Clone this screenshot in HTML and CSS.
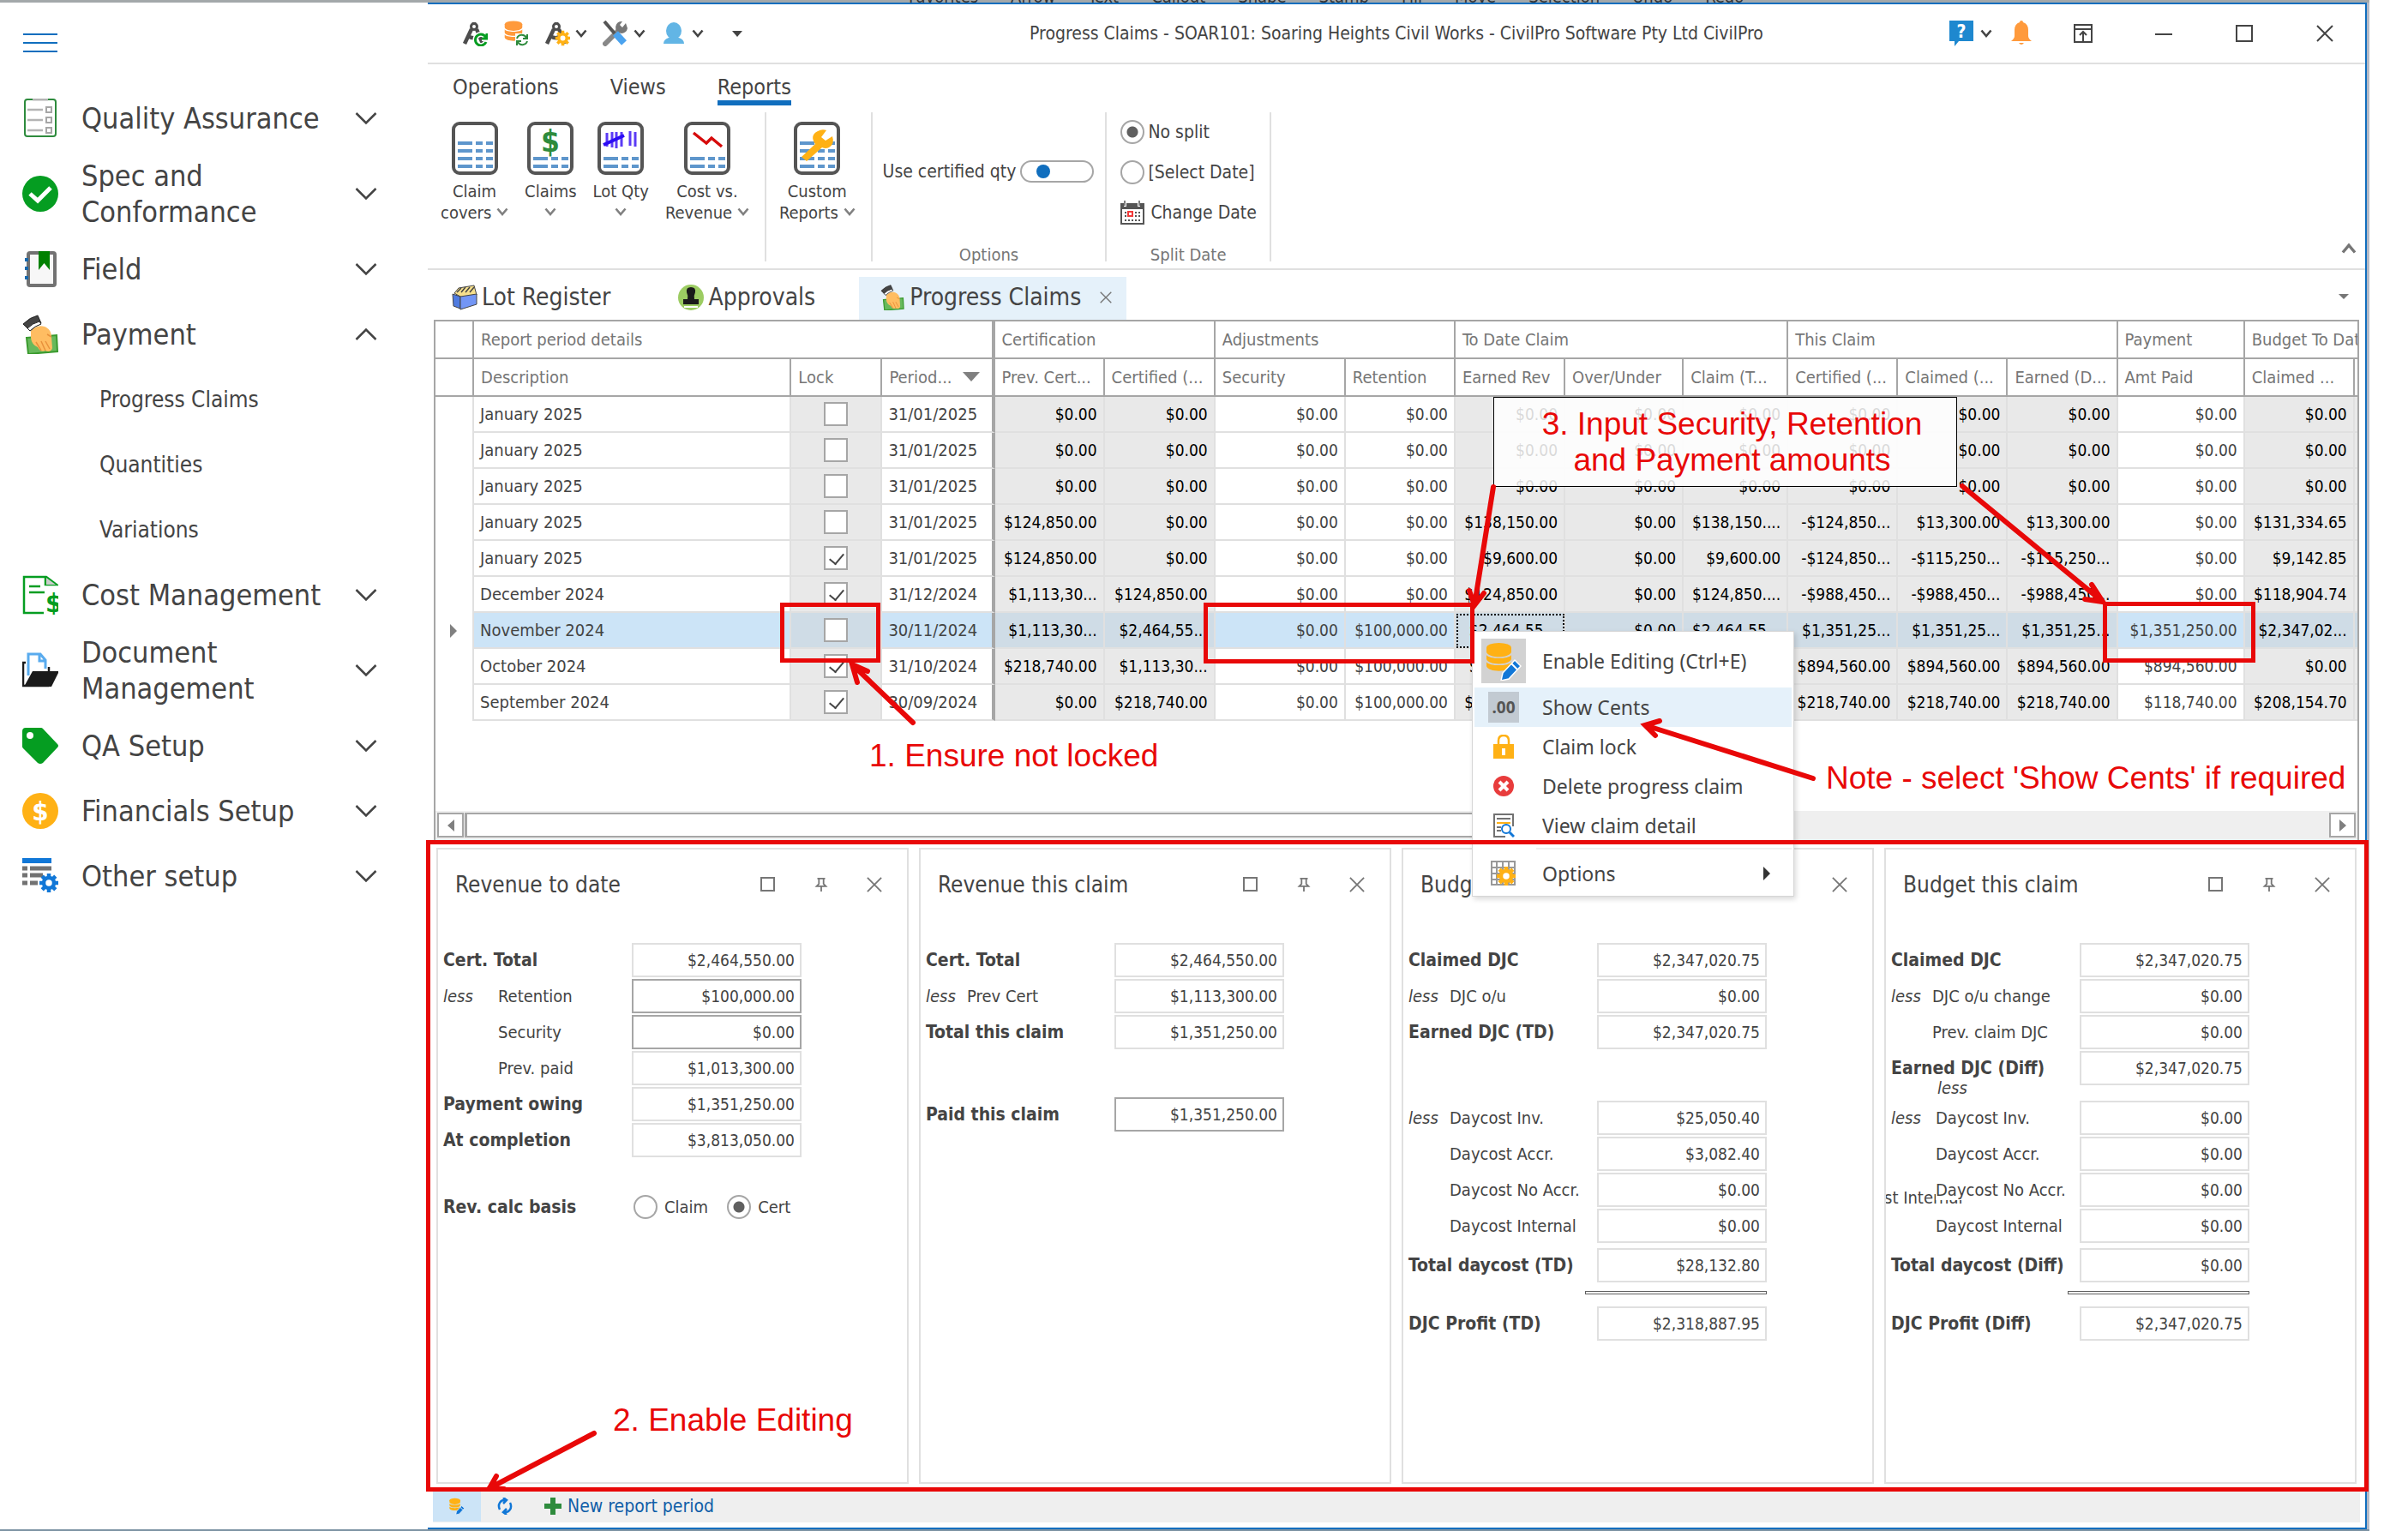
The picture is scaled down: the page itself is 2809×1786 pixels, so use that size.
FILE: index.html
```html
<!DOCTYPE html>
<html lang="en">
<head>
  <meta charset="UTF-8" />
  <meta name="viewport" content="width=device-width, initial-scale=1.0"/>
  <title>Progress Claims - CivilPro</title>
  <link rel="stylesheet" href="styles.css">
</head>
<body>
  <!-- shared icons -->
  <svg class="defs" aria-hidden="true">
    <symbol id="down" viewBox="0 0 26 16"><path d="M1.5 2 13 13.500 24.500 2" fill="none" stroke="currentColor" stroke-width="2.500"/></symbol>
    <symbol id="small-down" viewBox="0 0 14 10"><path d="M1.500 1.500 7 8 12.500 1.500" fill="none" stroke="currentColor" stroke-width="2.600"/></symbol>
    <symbol id="cross" viewBox="0 0 20 20"><path d="M1 1 19 19M19 1 1 19" fill="none" stroke="currentColor" stroke-width="2"/></symbol>
    <symbol id="box" viewBox="0 0 18 18"><rect x="1" y="1" width="15" height="15" fill="none" stroke="currentColor" stroke-width="2"/></symbol>
    <symbol id="pin" viewBox="0 0 16 20"><path d="M3 2h10M5 2v7L2 12h12l-3-3V2M8 12v7" fill="none" stroke="currentColor" stroke-width="2"/></symbol>
    <symbol id="hand" viewBox="0 0 42 46">
      <path d="M5 27 40 24 41 43 7 46Z" fill="#67b95c" stroke="#3a9a2e" stroke-width="2"/>
      <path d="M10 19C14 14 20 12 26 14 31 16 34 20 34 26L35 39C34 43 30 44 27 42 23 44 20 42 18 38 13 36 10 31 10 26Z" fill="#ffbd62"/>
      <path d="M16 32 22 42M22 31 27 42M27 31 32 40M29 23 34 26" stroke="#e8913c" stroke-width="1.500" fill="none"/>
      <path d="M1 11Q9 3 18 1L22 10Q15 13 9 19Z" fill="#444" stroke="#222"/>
      <path d="M6 16Q12 10 20 8L22 11Q15 13 9 19Z" fill="#fff" stroke="#222"/>
    </symbol>
    <symbol id="compass" viewBox="0 0 30 30">
      <path d="M14 2v5M11 10 3 27M17 10l7 17M7 18q7 5 14-1" fill="none" stroke="#4d4d4d" stroke-width="4.500"/>
      <circle cx="14" cy="7" r="3.500" fill="#fff" stroke="#4d4d4d" stroke-width="3"/>
    </symbol>
    <symbol id="gear" viewBox="0 0 24 24">
      <path d="M12 1v22M1 12h22M4.200 4.200l15.600 15.600M19.800 4.200 4.200 19.800" stroke="currentColor" stroke-width="4.500"/>
      <circle cx="12" cy="12" r="6" fill="#fff" stroke="currentColor" stroke-width="4.500"/>
    </symbol>
    <symbol id="db" viewBox="0 0 30 34">
      <ellipse cx="15" cy="6" rx="14" ry="5.500"/>
      <path d="M1 6v5c2 7 26 7 28 0V6ZM1 14v5c2 7 26 7 28 0v-5c-3 5-25 5-28 0ZM1 22v5c2 7 26 7 28 0v-5c-3 5-25 5-28 0Z"/>
    </symbol>
    <symbol id="db-edit" viewBox="0 0 42 46">
      <use href="#db" x="0" y="0" width="31" height="38" fill="#ffb115"/>
      <path d="M18 46 20 37 34 22 41 29 27 44Z" fill="#1177d7" stroke="#fff" stroke-width="1.500"/>
      <path d="M30 26 37 33" stroke="#fff" stroke-width="2"/>
    </symbol>
    <symbol id="page" viewBox="0 0 54 62">
      <rect x="2" y="2" width="50" height="58" rx="7" fill="#fff" stroke="#555" stroke-width="4"/>
      <path d="M7 43h17m4 0h8m4 0h8M7 52h17m4 0h8m4 0h8" stroke="#5e96cc" stroke-width="4"/>
    </symbol>
    <symbol id="page-lines" viewBox="0 0 54 62">
      <use href="#page"/>
      <path d="M7 25h17m4 0h8m4 0h8M7 34h17m4 0h8m4 0h8" stroke="#5e96cc" stroke-width="4"/>
    </symbol>
  </svg>

  <div class="behind-top" aria-hidden="true"><span>Favorites</span><span>Arrow</span><span>Text</span><span>Callout</span><span>Shape</span><span>Stamp</span><span>Fill</span><span>Move</span><span>Selection</span><span>Undo</span><span>Redo</span></div>

  <div class="app">
    <nav class="sidebar">
      <button class="menu-toggle" aria-label="Toggle menu"><svg viewBox="0 0 40 22"><path d="M0 1h40M0 11h40M0 21h40" stroke="#106ebe" stroke-width="2"/></svg></button>

      <button class="nav-item">
        <svg class="nav-icon" viewBox="0 0 42 46"><rect x="3" y="1" width="36" height="43" rx="3" fill="#fff" stroke="#2e8b3d" stroke-width="2"/><path d="M12 1h18" stroke="#b4b4b4" stroke-width="3"/><path d="M6 13h18M6 25h18M6 37h18" stroke="#b4b4b4" stroke-width="2.500"/><path d="M28 10h6v6h-6ZM28 22h6v6h-6ZM28 34h6v6h-6Z" fill="none" stroke="#a6a6a6" stroke-width="2"/></svg>
        <span>Quality Assurance</span><svg class="chev"><use href="#down"/></svg>
      </button>
      <button class="nav-item double">
        <svg class="nav-icon" viewBox="0 0 42 46"><circle cx="21" cy="23" r="21" fill="#059d21"/><path d="m9 23 9 8 15-15" fill="none" stroke="#fff" stroke-width="5"/></svg>
        <span>Spec and Conformance</span><svg class="chev"><use href="#down"/></svg>
      </button>
      <button class="nav-item">
        <svg class="nav-icon" viewBox="0 0 42 46"><rect x="7" y="4" width="31" height="38" rx="2" fill="#f7f7f7" stroke="#727272" stroke-width="4"/><path d="M3 12h4M3 22h4M3 33h4" stroke="#1768ac" stroke-width="4"/><path d="M19 2h13v22l-6.500-8L19 24Z" fill="#008000"/></svg>
        <span>Field</span><svg class="chev"><use href="#down"/></svg>
      </button>
      <button class="nav-item">
        <svg class="nav-icon"><use href="#hand"/></svg>
        <span>Payment</span><svg class="chev up"><use href="#down"/></svg>
      </button>
      <a class="nav-sub" href="#">Progress Claims</a>
      <a class="nav-sub" href="#">Quantities</a>
      <a class="nav-sub" href="#">Variations</a>
      <button class="nav-item">
        <svg class="nav-icon" viewBox="0 0 42 46"><path d="M25 44H2V2h26l12 9H27V2M8 13h13M8 20h18" fill="none" stroke="#059d21" stroke-width="2.500"/><path d="M28 3v8h11Z" fill="#ccc"/><text x="27" y="43" font-size="31" font-weight="bold" fill="#059d21">$</text></svg>
        <span>Cost Management</span><svg class="chev"><use href="#down"/></svg>
      </button>
      <button class="nav-item double">
        <svg class="nav-icon" viewBox="0 0 42 46"><path d="M4 14H1v27h30M31 19v5" fill="none" stroke="#1a1a1a" stroke-width="2.500"/><path d="M7 29V4h14l6 7v10M20 4v8h7" fill="none" stroke="#59abee" stroke-width="3"/><path d="M12 24h31l-9 18H2Z" fill="#1a1a1a"/></svg>
        <span>Document Management</span><svg class="chev"><use href="#down"/></svg>
      </button>
      <button class="nav-item">
        <svg class="nav-icon" viewBox="0 0 42 46"><path d="M4 2h18q1 0 2 1l17 18q2 2 0 4L24 43q-3 2-6 0L1 26q-1-1-1-2V6q0-4 4-4Z" fill="#059d21"/><circle cx="9" cy="11" r="4" fill="#fff"/></svg>
        <span>QA Setup</span><svg class="chev"><use href="#down"/></svg>
      </button>
      <button class="nav-item">
        <svg class="nav-icon" viewBox="0 0 42 46"><circle cx="21" cy="23" r="21" fill="#ffb115"/><text x="21" y="34" font-size="31" font-weight="bold" text-anchor="middle" fill="#fff">$</text></svg>
        <span>Financials Setup</span><svg class="chev"><use href="#down"/></svg>
      </button>
      <button class="nav-item">
        <svg class="nav-icon" viewBox="0 0 42 46"><path d="M0 5h34" stroke="#1177d7" stroke-width="6"/><path d="M0 14h6m3 0h25M0 22h6m3 0h15M0 31h6m3 0h9" stroke="#727272" stroke-width="5"/><svg x="19" y="19" width="24" height="24" color="#1177d7"><use href="#gear"/></svg></svg>
        <span>Other setup</span><svg class="chev"><use href="#down"/></svg>
      </button>
    </nav>

    <main class="window">
      <header class="titlebar">
        <div class="quick">
          <button aria-label="Refresh project"><svg class="i30" viewBox="0 0 30 30"><use href="#compass"/><path d="M28 20a6.500 6.500 0 1 0 0 5M29 15v6h-6" fill="none" stroke="#fff" stroke-width="6"/><path d="M28 20a6.500 6.500 0 1 0 0 5M29 15v6h-6" fill="none" stroke="#059d21" stroke-width="3"/></svg></button>
          <button aria-label="Refresh data"><svg class="i30" viewBox="0 0 30 30"><use href="#db" x="1" y="0" width="22" height="25" fill="#ff9a3c"/><rect x="14" y="15" width="16" height="15" fill="#fff"/><path d="M16 21a6 6 0 0 1 11-1M28 16v5h-5M28 24a6 6 0 0 1-11 1M16 29v-5h5" fill="none" stroke="#2e8b3d" stroke-width="2"/></svg></button>
          <button aria-label="Project setup"><svg class="i30" viewBox="0 0 30 30"><use href="#compass"/><svg x="12" y="11" width="19" height="19" color="#ffb115"><use href="#gear"/></svg></svg><svg class="i12"><use href="#small-down"/></svg></button>
          <button aria-label="Tools"><svg class="i30" viewBox="0 0 30 30"><path d="M3 27 19 11" stroke="#888" stroke-width="6" stroke-linecap="round"/><path d="M27 3l-4 5-3-3 3-4a7 7 0 1 0 6 8Z" fill="#777"/><path d="M2 1 14 15" stroke="#555" stroke-width="4"/><path d="M15 15 25 26" stroke="#4ba3ef" stroke-width="8"/></svg><svg class="i12"><use href="#small-down"/></svg></button>
          <button aria-label="User"><svg class="i30" viewBox="0 0 30 30"><ellipse cx="15" cy="12" rx="9" ry="10" fill="#62b5e5"/><path d="M3 27q0-5 6-7h12q6 2 6 7Z" fill="#62b5e5"/></svg><svg class="i12"><use href="#small-down"/></svg></button>
          <button class="more" aria-label="Customise"><svg class="i12" viewBox="0 0 12 12"><path d="M0 3h12L6 10Z" fill="#444"/></svg></button>
        </div>
        <h1>Progress Claims - SOAR101: Soaring Heights Civil Works - CivilPro Software Pty Ltd CivilPro</h1>
        <div class="controls">
          <button class="help" aria-label="Help"><svg class="i30" viewBox="0 0 30 30"><path d="M1 0h28v24H12l-5 6v-6H1Z" fill="#1e88cf"/><text x="15" y="20" font-size="21" font-weight="bold" text-anchor="middle" fill="#fff">?</text></svg><svg class="i12"><use href="#small-down"/></svg></button>
          <button class="bell" aria-label="Notifications"><svg class="i30" viewBox="0 0 30 30"><path d="M15 0q2 0 2 2 6 2 6 9v7q0 3 4 6H3q4-3 4-6v-7q0-7 6-9 0-2 2-2ZM12 26h6q-3 4-6 0Z" fill="#ff9a3c"/></svg></button>
          <button aria-label="Ribbon options"><svg class="i22" viewBox="0 0 22 22"><path d="M1 1h20v20H1ZM1 6h20M11 20V9M7 13l4-4 4 4" fill="none" stroke="#444" stroke-width="2"/></svg></button>
          <button aria-label="Minimise"><svg class="i20" viewBox="0 0 20 20"><path d="M0 11h20" stroke="#444" stroke-width="2"/></svg></button>
          <button aria-label="Maximise"><svg class="i20" viewBox="0 0 20 20"><path d="M1 1h18v18H1Z" fill="none" stroke="#444" stroke-width="2"/></svg></button>
          <button aria-label="Close"><svg class="i20"><use href="#cross"/></svg></button>
        </div>
      </header>

      <nav class="ribbon-tabs">
        <a href="#">Operations</a>
        <a href="#">Views</a>
        <a href="#" class="active">Reports</a>
      </nav>

      <section class="ribbon">
        <div class="group">
          <div class="group-body reports">
            <button class="big"><svg><use href="#page-lines"/></svg><span>Claim<br>covers <svg class="i10"><use href="#small-down"/></svg></span></button>
            <button class="big"><svg viewBox="0 0 54 62"><use href="#page"/><text x="27" y="35" font-size="35" font-weight="bold" text-anchor="middle" fill="#2e8b3d">$</text></svg><span>Claims<br><svg class="i10"><use href="#small-down"/></svg></span></button>
            <button class="big"><svg viewBox="0 0 54 62"><use href="#page"/><path d="M11 13v16M17 12v18M22 12v19M28 12v17M38 11v17M44 12v17" stroke="#5b3bf5" stroke-width="3"/><path d="M7 27 31 16" stroke="#2b0bf5" stroke-width="4"/></svg><span>Lot Qty<br><svg class="i10"><use href="#small-down"/></svg></span></button>
            <button class="big"><svg viewBox="0 0 54 62"><use href="#page"/><path d="m11 13 15 12 6-6 12 10" fill="none" stroke="#d60b0b" stroke-width="3.500"/></svg><span>Cost vs.<br>Revenue <svg class="i10"><use href="#small-down"/></svg></span></button>
          </div>
          <div class="group-label"></div>
        </div>
        <div class="group">
          <div class="group-body custom">
            <button class="big"><svg viewBox="0 0 54 62"><use href="#page-lines"/><path d="m9 41 16-15q-7-10 3-15 5-3 10-1l-6 8 5 4 8-5q3 9-4 13-4 2-8 0L15 46Z" fill="#ffb115"/></svg><span>Custom<br>Reports <svg class="i10"><use href="#small-down"/></svg></span></button>
          </div>
          <div class="group-label"></div>
        </div>
        <div class="group">
          <label class="group-body options">Use certified qty <input type="checkbox" role="switch" class="switch"></label>
          <div class="group-label">Options</div>
        </div>
        <div class="group">
          <div class="group-body split">
            <label><input type="radio" name="split" checked>No split</label>
            <label><input type="radio" name="split">[Select Date]</label>
            <button><svg viewBox="0 0 28 28"><path d="M1 9h26v18H1Z" fill="#fff" stroke="#555" stroke-width="2"/><path d="M0 3h4v4h3V3h13v4h3V3h5v7H0Z" fill="#555"/><path d="M5 0v6M22 0v6" stroke="#555" stroke-width="1.500"/><path d="M5 14h20M5 18h20M5 23h20" stroke="#555" stroke-width="2" stroke-dasharray="2 2"/><rect x="9" y="13" width="5" height="5" fill="#fff" stroke="#f03a3a" stroke-width="2"/></svg>Change Date</button>
          </div>
          <div class="group-label">Split Date</div>
        </div>
        <button class="collapse" aria-label="Collapse ribbon"><svg class="i18 up"><use href="#small-down"/></svg></button>
      </section>

      <nav class="doc-tabs">
        <a href="#"><svg class="i30" viewBox="0 0 30 30"><path d="m3 10 5-6 18-3 3 11-12 6Z" fill="#f7e08c" stroke="#444"/><path d="m6 9 5-5m0 5 5-6m0 6 5-6m0 6 5-6" stroke="#444" stroke-width="1.500"/><path d="m1 11 9 3v14l-8-3Z" fill="#4f7be0" stroke="#444"/><path d="m10 14 19-3v12l-19 6Z" fill="#7396f5" stroke="#444"/></svg>Lot Register</a>
        <a href="#"><svg class="i30" viewBox="0 0 30 30"><circle cx="15" cy="15" r="15" fill="#9ccc62"/><path d="M15 3q6 0 5 6-2 4-1 8h5v6H6v-6h5q1-4-1-8-1-6 5-6Z" fill="#1a1a1a"/><path d="M7 26h16" stroke="#fff" stroke-width="2"/></svg>Approvals</a>
        <a href="#" class="active"><svg class="i30"><use href="#hand"/></svg>Progress Claims<svg class="i16 close"><use href="#cross"/></svg></a>
        <button aria-label="Open tabs"><svg class="i12" viewBox="0 0 12 12"><path d="M0 3h12L6 9Z" fill="#767676"/></svg></button>
      </nav>

      <section class="grid">
        <table>
          <colgroup>
            <col class="w45"><col class="w370"><col class="w106"><col class="w131"><col class="w128"><col class="w129"><col class="w152"><col class="w128"><col class="w128"><col class="w138"><col class="w122"><col class="w128"><col class="w128"><col class="w128"><col class="w148"><col class="w128"><col class="w128">
          </colgroup>
          <thead>
            <tr><th></th><th colspan="3" class="fixed">Report period details</th><th colspan="2">Certification</th><th colspan="2">Adjustments</th><th colspan="3">To Date Claim</th><th colspan="3">This Claim</th><th>Payment</th><th colspan="2">Budget To Date</th></tr>
            <tr><th></th><th>Description</th><th>Lock</th><th class="fixed"><span class="sorted">Period... <svg viewBox="0 0 20 12"><path d="M0 0h20L10 11Z" fill="#808080"/></svg></span></th><th>Prev. Cert...</th><th>Certified (...</th><th>Security</th><th>Retention</th><th>Earned Rev</th><th>Over/Under</th><th>Claim (T...</th><th>Certified (...</th><th>Claimed (...</th><th>Earned (D...</th><th>Amt Paid</th><th>Claimed ...</th><th></th></tr>
          </thead>
          <tbody>
            <tr><td></td><td>January 2025</td><td><input type="checkbox" aria-label="Lock"></td><td>31/01/2025</td><td>$0.00</td><td>$0.00</td><td>$0.00</td><td>$0.00</td><td>$0.00</td><td>$0.00</td><td>$0.00</td><td>$0.00</td><td>$0.00</td><td>$0.00</td><td>$0.00</td><td>$0.00</td><td></td></tr>
            <tr><td></td><td>January 2025</td><td><input type="checkbox" aria-label="Lock"></td><td>31/01/2025</td><td>$0.00</td><td>$0.00</td><td>$0.00</td><td>$0.00</td><td>$0.00</td><td>$0.00</td><td>$0.00</td><td>$0.00</td><td>$0.00</td><td>$0.00</td><td>$0.00</td><td>$0.00</td><td></td></tr>
            <tr><td></td><td>January 2025</td><td><input type="checkbox" aria-label="Lock"></td><td>31/01/2025</td><td>$0.00</td><td>$0.00</td><td>$0.00</td><td>$0.00</td><td>$0.00</td><td>$0.00</td><td>$0.00</td><td>$0.00</td><td>$0.00</td><td>$0.00</td><td>$0.00</td><td>$0.00</td><td></td></tr>
            <tr><td></td><td>January 2025</td><td><input type="checkbox" aria-label="Lock"></td><td>31/01/2025</td><td>$124,850.00</td><td>$0.00</td><td>$0.00</td><td>$0.00</td><td>$138,150.00</td><td>$0.00</td><td>$138,150....</td><td>-$124,850...</td><td>$13,300.00</td><td>$13,300.00</td><td>$0.00</td><td>$131,334.65</td><td></td></tr>
            <tr><td></td><td>January 2025</td><td><input type="checkbox" aria-label="Lock" checked></td><td>31/01/2025</td><td>$124,850.00</td><td>$0.00</td><td>$0.00</td><td>$0.00</td><td>$9,600.00</td><td>$0.00</td><td>$9,600.00</td><td>-$124,850...</td><td>-$115,250...</td><td>-$115,250...</td><td>$0.00</td><td>$9,142.85</td><td></td></tr>
            <tr><td></td><td>December 2024</td><td><input type="checkbox" aria-label="Lock" checked></td><td>31/12/2024</td><td>$1,113,30...</td><td>$124,850.00</td><td>$0.00</td><td>$0.00</td><td>$124,850.00</td><td>$0.00</td><td>$124,850....</td><td>-$988,450...</td><td>-$988,450...</td><td>-$988,450...</td><td>$0.00</td><td>$118,904.74</td><td></td></tr>
            <tr class="selected"><td><svg viewBox="0 0 8 16"><path d="M0 0 8 8 0 16Z" fill="#808080"/></svg></td><td>November 2024</td><td><input type="checkbox" aria-label="Lock"></td><td>30/11/2024</td><td>$1,113,30...</td><td>$2,464,55...</td><td>$0.00</td><td>$100,000.00</td><td class="focused">$2,464,55...</td><td>$0.00</td><td>$2,464,55...</td><td>$1,351,25...</td><td>$1,351,25...</td><td>$1,351,25...</td><td>$1,351,250.00</td><td>$2,347,02...</td><td></td></tr>
            <tr><td></td><td>October 2024</td><td><input type="checkbox" aria-label="Lock" checked></td><td>31/10/2024</td><td>$218,740.00</td><td>$1,113,30...</td><td>$0.00</td><td>$100,000.00</td><td>$1,113,30...</td><td>$0.00</td><td>$1,113,30...</td><td>$894,560.00</td><td>$894,560.00</td><td>$894,560.00</td><td>$894,560.00</td><td>$0.00</td><td></td></tr>
            <tr><td></td><td>September 2024</td><td><input type="checkbox" aria-label="Lock" checked></td><td>30/09/2024</td><td>$0.00</td><td>$218,740.00</td><td>$0.00</td><td>$100,000.00</td><td>$218,740.00</td><td>$0.00</td><td>$218,740....</td><td>$218,740.00</td><td>$218,740.00</td><td>$218,740.00</td><td>$118,740.00</td><td>$208,154.70</td><td></td></tr>
          </tbody>
        </table>
        <div class="scrollbar">
          <button aria-label="Scroll left"><svg viewBox="0 0 8 14"><path d="M8 0 0 7 8 14Z" fill="#808080"/></svg></button>
          <div class="thumb"></div>
          <button aria-label="Scroll right"><svg viewBox="0 0 8 14"><path d="M0 0 8 7 0 14Z" fill="#808080"/></svg></button>
        </div>
      </section>

      <section class="panels">
        <article class="panel wide-indent">
          <header><h2>Revenue to date</h2><button aria-label="Maximise"><svg><use href="#box"/></svg></button><button aria-label="Pin"><svg><use href="#pin"/></svg></button><button aria-label="Close"><svg><use href="#cross"/></svg></button></header>
          <div class="fields">
            <label class="row"><b>Cert. Total</b><input value="$2,464,550.00" readonly></label>
            <label class="row"><span><i>less</i>Retention</span><input value="$100,000.00"></label>
            <label class="row"><span class="in">Security</span><input value="$0.00"></label>
            <label class="row"><span class="in">Prev. paid</span><input value="$1,013,300.00" readonly></label>
            <label class="row"><b>Payment owing</b><input value="$1,351,250.00" readonly></label>
            <label class="row"><b>At completion</b><input value="$3,813,050.00" readonly></label>
            <div class="row basis"><b>Rev. calc basis</b><label><input type="radio" name="basis">Claim</label><label><input type="radio" name="basis" checked>Cert</label></div>
          </div>
        </article>
        <article class="panel">
          <header><h2>Revenue this claim</h2><button aria-label="Maximise"><svg><use href="#box"/></svg></button><button aria-label="Pin"><svg><use href="#pin"/></svg></button><button aria-label="Close"><svg><use href="#cross"/></svg></button></header>
          <div class="fields">
            <label class="row"><b>Cert. Total</b><input value="$2,464,550.00" readonly></label>
            <label class="row"><span><i>less</i>Prev Cert</span><input value="$1,113,300.00" readonly></label>
            <label class="row"><b>Total this claim</b><input value="$1,351,250.00" readonly></label>
            <label class="row paid"><b>Paid this claim</b><input value="$1,351,250.00"></label>
          </div>
        </article>
        <article class="panel">
          <header><h2>Budget to date</h2><button aria-label="Maximise"><svg><use href="#box"/></svg></button><button aria-label="Pin"><svg><use href="#pin"/></svg></button><button aria-label="Close"><svg><use href="#cross"/></svg></button></header>
          <div class="fields">
            <label class="row"><b>Claimed DJC</b><input value="$2,347,020.75" readonly></label>
            <label class="row"><span><i>less</i>DJC o/u</span><input value="$0.00" readonly></label>
            <label class="row"><b>Earned DJC (TD)</b><input value="$2,347,020.75" readonly></label>
            <div class="row"></div>
            <div class="daycosts">
              <label class="row"><span><i>less</i>Daycost Inv.</span><input value="$25,050.40" readonly></label>
              <label class="row"><span class="in">Daycost Accr.</span><input value="$3,082.40" readonly></label>
              <label class="row"><span class="in">Daycost No Accr.</span><input value="$0.00" readonly></label>
              <label class="row"><span class="in">Daycost Internal</span><input value="$0.00" readonly></label>
            </div>
            <label class="row"><b>Total daycost (TD)</b><input value="$28,132.80" readonly></label>
            <div class="rule"></div>
            <label class="row"><b>DJC Profit (TD)</b><input value="$2,318,887.95" readonly></label>
          </div>
        </article>
        <article class="panel">
          <header><h2>Budget this claim</h2><button aria-label="Maximise"><svg><use href="#box"/></svg></button><button aria-label="Pin"><svg><use href="#pin"/></svg></button><button aria-label="Close"><svg><use href="#cross"/></svg></button></header>
          <div class="fields">
            <label class="row"><b>Claimed DJC</b><input value="$2,347,020.75" readonly></label>
            <label class="row"><span><i>less</i>DJC o/u change</span><input value="$0.00" readonly></label>
            <label class="row"><span class="in">Prev. claim DJC</span><input value="$0.00" readonly></label>
            <label class="row"><b>Earned DJC (Diff)</b><input value="$2,347,020.75" readonly></label>
            <div class="daycosts diff">
              <i class="stray-less">less</i>
              <span class="stray-internal">st Internal</span>
              <label class="row"><span><i>less</i>Daycost Inv.</span><input value="$0.00" readonly></label>
              <label class="row"><span class="in">Daycost Accr.</span><input value="$0.00" readonly></label>
              <label class="row"><span class="in"><span class="cover">Daycost No Accr.</span></span><input value="$0.00" readonly></label>
              <label class="row"><span class="in">Daycost Internal</span><input value="$0.00" readonly></label>
            </div>
            <label class="row"><b>Total daycost (Diff)</b><input value="$0.00" readonly></label>
            <div class="rule"></div>
            <label class="row"><b>DJC Profit (Diff)</b><input value="$2,347,020.75" readonly></label>
          </div>
        </article>
      </section>

      <footer class="statusbar">
        <button class="edit" aria-label="Enable editing"><svg><use href="#db-edit"/></svg></button>
        <button class="sync" aria-label="Refresh"><svg viewBox="0 0 20 20"><path d="M11 3C5 2 1 8 4 14M9 17c6 1 10-5 7-11M8 0l4 3-4 4M12 13l-4 4 4 3" fill="none" stroke="#1177d7" stroke-width="2.500"/></svg></button>
        <button class="new"><svg viewBox="0 0 20 20"><path d="M10 0v20M0 10h20" stroke="#2e8b3d" stroke-width="6"/></svg>New report period</button>
      </footer>
    </main>
  </div>
  <div class="behind-bottom"></div>

  <menu class="context">
    <li class="tall"><button><span class="pic on-big"><svg class="i42"><use href="#db-edit"/></svg></span>Enable Editing (Ctrl+E)</button></li>
    <li class="hover"><button><span class="pic"><b class="cents">.00</b></span>Show Cents</button></li>
    <li><button><span class="pic"><svg class="i26" viewBox="0 0 26 28"><path d="M1 11h24v17H1Z" fill="#ffb115"/><path d="M7 12V7q0-6 6-6t6 6v5" fill="none" stroke="#ffb115" stroke-width="2.500"/><path d="M13 16v8" stroke="#fff" stroke-width="4"/></svg></span>Claim lock</button></li>
    <li><button><span class="pic"><svg class="i26" viewBox="0 0 26 26"><circle cx="13" cy="13" r="12" fill="#e83c3c"/><path d="m8 8 10 10M18 8 8 18" stroke="#fff" stroke-width="4"/></svg></span>Delete progress claim</button></li>
    <li><button><span class="pic"><svg class="i26" viewBox="0 0 26 28"><path d="M24 15V1H2v26h13" fill="none" stroke="#727272" stroke-width="2"/><path d="M5 6h16M5 16h5M5 20h5" stroke="#727272" stroke-width="2"/><path d="M5 11h16" stroke="#ffb115" stroke-width="2"/><circle cx="16" cy="18" r="5" fill="#fff" stroke="#1177d7" stroke-width="2"/><path d="m20 22 5 5" stroke="#1177d7" stroke-width="3"/></svg></span>View claim detail</button></li>
    <li class="separator"></li>
    <li><button><span class="pic"><svg class="i30" viewBox="0 0 30 30"><path d="M1 1h27v27H1ZM7 1v27M14 1v27M21 1v27M1 8h27M1 15h27M1 22h27" fill="none" stroke="#999" stroke-width="2"/><svg x="6" y="6" width="24" height="24" color="#ffb115"><use href="#gear"/></svg></svg></span>Options<svg class="sub" viewBox="0 0 8 16"><path d="M0 0 8 8 0 16Z" fill="#333"/></svg></button></li>
  </menu>

  <!-- step notes over the window -->
  <div class="notes">
    <div class="mark lock-cell"></div>
    <div class="mark adjustment-cells"></div>
    <div class="mark paid-cell"></div>
    <div class="mark panel-area"></div>
    <p class="callout">3. Input Security, Retention<br>and Payment amounts</p>
    <p class="note one">1. Ensure not locked</p>
    <p class="note two">2. Enable Editing</p>
    <p class="note cents-note">Note - select 'Show Cents' if required</p>
    <svg class="arrows" width="2809" height="1786">
      <path d="M1065 843 994 775M1000 796 994 775 1012 783"/>
      <path d="M1742 568 1720 706M1714 689 1720 706 1731 692"/>
      <path d="M2289 567 2453 702M2440 682 2453 702 2432 699"/>
      <path d="M2115 908 1919 846M1936 841 1919 846 1931 858"/>
      <path d="M693 1672 571 1736M579 1722 571 1736 588 1737"/>
    </svg>
  </div>
</body>
</html>
```
FILE: styles.css
```css
* {
  box-sizing: border-box;
}

body {
  margin: 0;
  min-height: 100vh;
  display: flex;
  flex-direction: column;
  position: relative;
  background: white;
  color: #444;
  font-family: "DejaVu Sans Condensed", "Noto Sans", sans-serif;
  font-size: 20px;
}

button {
  background: none;
  border: none;
  padding: 0;
  margin: 0;
  color: inherit;
  font: inherit;
  display: flex;
  align-items: center;
}

a {
  color: inherit;
  text-decoration: none;
}

svg {
  flex: none;
}

.defs {
  position: absolute;
  width: 0;
  height: 0;
}

.i10 { width: 14px; height: 10px; }
.i12 { width: 14px; height: 12px; }
.i16 { width: 16px; height: 14px; }
.i18 { width: 18px; height: 14px; }
.i20 { width: 20px; height: 20px; }
.i22 { width: 22px; height: 22px; }
.i26 { width: 26px; height: 28px; }
.i30 { width: 30px; height: 30px; }
.i42 { width: 42px; height: 46px; }

.up {
  transform: rotate(180deg);
}

/* slivers of the application behind */
.behind-top {
  height: 3px;
  margin-right: 45px;
  padding-left: 1060px;
  background: #a3a8aa;
  display: flex;
  align-items: flex-end;
  gap: 38px;
  overflow: hidden;
  color: #333;
  font-size: 20px;
  line-height: 14px;
}

.behind-bottom {
  height: 2px;
  margin-right: 45px;
  background: #7d93a3;
}

.app {
  flex: 1;
  display: flex;
  padding-right: 48px;
}

/* sidebar */
.sidebar {
  width: 499px;
  flex: none;
  padding-top: 36px;
  font-size: 34px;
  line-height: 42px;
}

.menu-toggle {
  width: 40px;
  height: 22px;
  margin: 0 0 39px 27px;
}

.menu-toggle svg {
  width: 40px;
  height: 22px;
}

.nav-item {
  width: 100%;
  height: 76px;
  padding: 0 59px 0 26px;
  text-align: left;
}

.nav-item.double {
  height: 100px;
}

.nav-item span {
  width: 310px;
  margin-left: 27px;
}

.nav-item.double span {
  padding-right: 80px;
}

.nav-icon {
  width: 42px;
  height: 46px;
}

.chev {
  width: 26px;
  height: 16px;
  margin-left: auto;
}

.nav-sub {
  display: flex;
  align-items: center;
  height: 76px;
  padding-left: 116px;
  font-size: 26px;
}

/* window */
.window {
  flex: 1;
  min-width: 0;
  display: flex;
  flex-direction: column;
  border: 2px solid #106ebe;
  border-left: none;
  box-shadow: 3px 0 0 #b5b9c4;
}

.titlebar {
  display: grid;
  grid-template-columns: 1fr auto 1fr;
  align-items: center;
  height: 70px;
  border-bottom: 2px solid #e0e0e0;
}

.titlebar h1 {
  margin: 0;
  font-size: 21px;
  font-weight: normal;
}

.quick {
  display: flex;
  gap: 18px;
  padding-left: 40px;
}

.quick button {
  gap: 6px;
}

.quick .more {
  margin-left: 14px;
}

.controls {
  display: flex;
  justify-content: flex-end;
}

.controls button {
  width: 94px;
  justify-content: center;
}

.controls .help {
  width: 60px;
  justify-content: flex-start;
  gap: 7px;
}

.controls .bell {
  width: 50px;
}

.ribbon-tabs {
  display: flex;
  gap: 60px;
  height: 56px;
  padding-left: 29px;
  font-size: 25px;
  line-height: 38px;
}

.ribbon-tabs a {
  height: 48px;
  padding-top: 8px;
}

.ribbon-tabs .active {
  border-bottom: 6px solid #106ebe;
}

.ribbon {
  display: flex;
  height: 184px;
  border-bottom: 2px solid #e0e0e0;
}

.group {
  height: 174px;
  border-right: 2px solid #e0e0e0;
}

.group-body {
  display: flex;
  height: 147px;
  border-bottom: 2px solid white;
}

.group-label {
  height: 27px;
  line-height: 38px;
  text-align: center;
  color: #767676;
}

.reports {
  gap: 19px;
  padding: 0 18px 0 15px;
}

.custom {
  padding: 0 18px 0 15px;
}

.big {
  flex-direction: column;
  gap: 7px;
  padding-top: 11px;
  line-height: 25px;
  text-align: center;
}

.big > svg {
  width: 54px;
  height: 62px;
}

.big .i10 {
  vertical-align: 3px;
  color: #808080;
}

.options {
  align-items: center;
  gap: 5px;
  padding: 0 13px 8px 12px;
  font-size: 21px;
}

.switch {
  appearance: none;
  width: 86px;
  height: 26px;
  margin: 0;
  border: 2px solid #a6a6a6;
  border-radius: 13px;
}

.switch::after {
  content: "";
  display: block;
  width: 16px;
  height: 16px;
  margin: 3px 0 0 17px;
  border-radius: 50%;
  background: #106ebe;
}

.split {
  flex-direction: column;
  justify-content: space-between;
  padding: 0 15px 5px 16px;
  font-size: 21px;
}

.split label,
.split button {
  display: flex;
  align-items: center;
  height: 46px;
  gap: 4px;
}

.split button {
  gap: 7px;
}

.split button svg {
  width: 28px;
  height: 28px;
}

input[type="radio"] {
  appearance: none;
  width: 28px;
  height: 28px;
  margin: 0;
  border: 2px solid #a6a6a6;
  border-radius: 50%;
  background: white;
}

input[type="radio"]:checked {
  background: radial-gradient(circle, #606060 6px, white 7px);
}

.collapse {
  margin: 149px 10px 0 auto;
  height: 20px;
  color: #767676;
}

.doc-tabs {
  display: flex;
  gap: 23px;
  height: 58px;
  padding-top: 8px;
  font-size: 28px;
}

.doc-tabs a {
  display: flex;
  align-items: center;
  gap: 5px;
  padding: 0 28px 3px;
}

.doc-tabs .active {
  background: #e5f1fa;
  padding: 0 16px 3px 24px;
}

.doc-tabs .close {
  margin-left: 16px;
  color: #767676;
}

.doc-tabs button {
  margin: 0 18px 4px auto;
}

/* claims grid */
.grid {
  flex: none;
  height: 607px;
  margin: 0 7px 0 7px;
  border: 2px solid #a6a6a6;
  border-bottom: none;
  display: flex;
  flex-direction: column;
  overflow: hidden;
}

table {
  width: 2367px;
  flex: none;
  table-layout: fixed;
  border-collapse: separate;
  border-spacing: 0;
}

.w45 { width: 45px; }
.w106 { width: 106px; }
.w122 { width: 122px; }
.w128 { width: 128px; }
.w129 { width: 129px; }
.w131 { width: 131px; }
.w138 { width: 138px; }
.w148 { width: 148px; }
.w152 { width: 152px; }
.w370 { width: 370px; }

th {
  height: 44px;
  padding: 0 0 0 8px;
  border-right: 2px solid #a6a6a6;
  border-bottom: 2px solid #a6a6a6;
  color: #767676;
  font-weight: normal;
  text-align: left;
  white-space: nowrap;
}

th.fixed,
td:nth-child(4) {
  border-right: 4px solid #a6a6a6;
}

.sorted {
  display: flex;
  align-items: center;
  justify-content: space-between;
  padding-right: 14px;
}

.sorted svg {
  width: 20px;
  height: 12px;
}

td {
  height: 42px;
  padding: 0 7px 1px;
  border-right: 2px solid #e0e0e0;
  border-bottom: 2px solid #e0e0e0;
  background: #e9e9e9;
  color: black;
  font-size: 19px;
  line-height: 24px;
  text-align: right;
  white-space: nowrap;
}

td:nth-child(1) {
  border-bottom: none;
  text-align: center;
}

td:nth-child(1) svg {
  display: block;
  width: 8px;
  height: 16px;
  margin-left: 10px;
}

td:nth-child(1),
td:nth-child(2),
td:nth-child(4),
td:nth-child(7),
td:nth-child(8),
td:nth-child(15) {
  background: white;
  color: #444;
}

td:nth-child(2),
td:nth-child(4) {
  font-size: 20px;
  text-align: left;
}

td:nth-child(3) {
  text-align: center;
}

.selected td:nth-child(n+2) {
  background: #cfdce6;
}

.selected td:nth-child(2),
.selected td:nth-child(4),
.selected td:nth-child(7),
.selected td:nth-child(8),
.selected td:nth-child(15) {
  background: #cce4f7;
}

.focused {
  outline: 2px dotted black;
  outline-offset: -3px;
}

td input {
  appearance: none;
  display: block;
  width: 28px;
  height: 28px;
  margin: 0 auto;
  border: 2px solid #a6a6a6;
  background: white;
}

td input:checked::after {
  content: "";
  display: block;
  width: 8px;
  height: 14px;
  margin: 3px 0 0 8px;
  border: solid #444;
  border-width: 0 2px 2px 0;
  transform: rotate(40deg);
}

.scrollbar {
  display: flex;
  gap: 1px;
  height: 34px;
  margin-top: auto;
  padding: 2px 2px 3px;
  background: #efefef;
}

.scrollbar button {
  width: 31px;
  justify-content: center;
  border: 2px solid #a6a6a6;
  background: white;
}

.scrollbar svg {
  width: 8px;
  height: 14px;
}

.thumb {
  width: 1400px;
  margin-right: auto;
  border: 2px solid #a6a6a6;
  border-left-width: 3px;
  background: white;
}

/* summary panels */
.panels {
  flex: 1;
  display: flex;
  gap: 12px;
  padding: 9px 10px 8px;
}

.panel {
  --indent: 48px;
  flex: 1;
  position: relative;
  border: 2px solid #e0e0e0;
  overflow: hidden;
}

.wide-indent {
  --indent: 64px;
}

.panel header {
  display: flex;
  align-items: center;
  height: 82px;
  padding: 0 28px 0 20px;
}

.panel h2 {
  margin: 0 auto 0 0;
  font-size: 26px;
  font-weight: normal;
}

.panel header button {
  width: 20px;
  height: 20px;
  margin-left: 42px;
  justify-content: center;
  color: #767676;
}

.panel header svg {
  width: 18px;
  height: 18px;
}

.fields {
  padding: 26px 0 0 6px;
  line-height: 24px;
}

.row {
  display: flex;
  align-items: center;
  height: 42px;
}

.row > b,
.row > span {
  width: 220px;
  white-space: nowrap;
}

.row b {
  font-size: 21px;
}

.row span i {
  display: inline-block;
  width: var(--indent);
}

.row .in {
  padding-left: var(--indent);
}

.row > input {
  width: 198px;
  height: 40px;
  padding: 0 6px;
  border: 2px solid #a6a6a6;
  background: white;
  color: #444;
  font: inherit;
  font-size: 19px;
  text-align: right;
}

.row > input[readonly] {
  border-color: #e0e0e0;
}

.basis {
  margin-top: 36px;
}

.basis label {
  display: flex;
  align-items: center;
  gap: 8px;
  margin: 0 20px 0 2px;
}

.paid {
  margin-top: 54px;
}

.daycosts {
  position: relative;
  margin: 16px 0 4px;
}

.diff {
  --indent: 52px;
}

.stray-less {
  position: absolute;
  left: 54px;
  top: -26px;
}

.stray-internal {
  position: absolute;
  left: -8px;
  top: 102px;
}

.cover {
  position: relative;
  background: white;
}

.rule {
  width: 212px;
  height: 4px;
  margin: 9px 0 13px 206px;
  border: 1px solid #606060;
}

.statusbar {
  display: flex;
  height: 37px;
  margin: 0 6px 6px;
  padding-bottom: 1px;
  background: #efefef;
  font-size: 21px;
}

.statusbar svg {
  width: 20px;
  height: 20px;
}

.statusbar .edit,
.statusbar .sync {
  width: 56px;
  justify-content: center;
}

.statusbar .edit {
  background: #cce4f7;
}

.statusbar .new {
  gap: 7px;
  margin-left: 18px;
  color: #0f5ea8;
}

/* context menu */
.context {
  position: absolute;
  left: 1717px;
  top: 736px;
  width: 376px;
  margin: 0;
  padding: 3px 2px;
  border: 1px solid #d6d6d6;
  background: white;
  box-shadow: 2px 3px 6px rgba(0, 0, 0, 0.15);
  list-style: none;
  font-family: "Noto Sans", sans-serif;
  font-size: 23px;
}

.context button {
  width: 100%;
  height: 46px;
}

.context .tall button {
  height: 62px;
}

.context .hover {
  background: #e5f1fa;
}

.separator {
  height: 2px;
  margin: 3px 0 5px 72px;
  background: #efefef;
}

.pic {
  display: flex;
  align-items: center;
  justify-content: center;
  width: 52px;
  height: 52px;
  margin: 0 19px 0 8px;
}

.on-big {
  background: #d2d2d2;
}

.cents {
  width: 36px;
  background: #c2cad2;
  color: #555;
  font-size: 19px;
  line-height: 36px;
  text-align: center;
}

.sub {
  width: 8px;
  height: 16px;
  margin: 0 25px 0 auto;
}

/* step notes */
.notes {
  position: absolute;
  inset: 0;
  overflow: hidden;
  pointer-events: none;
  color: #e80808;
  font-family: "Liberation Sans", Arial, sans-serif;
  font-size: 37px;
  line-height: 42px;
}

.mark {
  position: absolute;
  border: 5px solid #e80808;
}

.lock-cell { left: 910px; top: 703px; width: 117px; height: 70px; }
.adjustment-cells { left: 1404px; top: 703px; width: 316px; height: 71px; }
.paid-cell { left: 2453px; top: 702px; width: 178px; height: 71px; }
.panel-area { left: 497px; top: 980px; width: 2266px; height: 760px; }

.callout {
  position: absolute;
  left: 1742px;
  top: 463px;
  width: 541px;
  height: 105px;
  margin: 0;
  padding: 10px 0 0 16px;
  border: 1px solid black;
  background: rgba(255, 255, 255, 0.85);
  text-align: center;
}

.note {
  position: absolute;
  margin: 0;
  white-space: nowrap;
}

.one { left: 1014px; top: 861px; }
.two { left: 715px; top: 1636px; }
.cents-note { left: 2130px; top: 887px; }

.arrows {
  position: absolute;
  left: 0;
  top: 0;
}

.arrows path {
  fill: none;
  stroke: #e80808;
  stroke-width: 6px;
  stroke-linecap: round;
}
```
